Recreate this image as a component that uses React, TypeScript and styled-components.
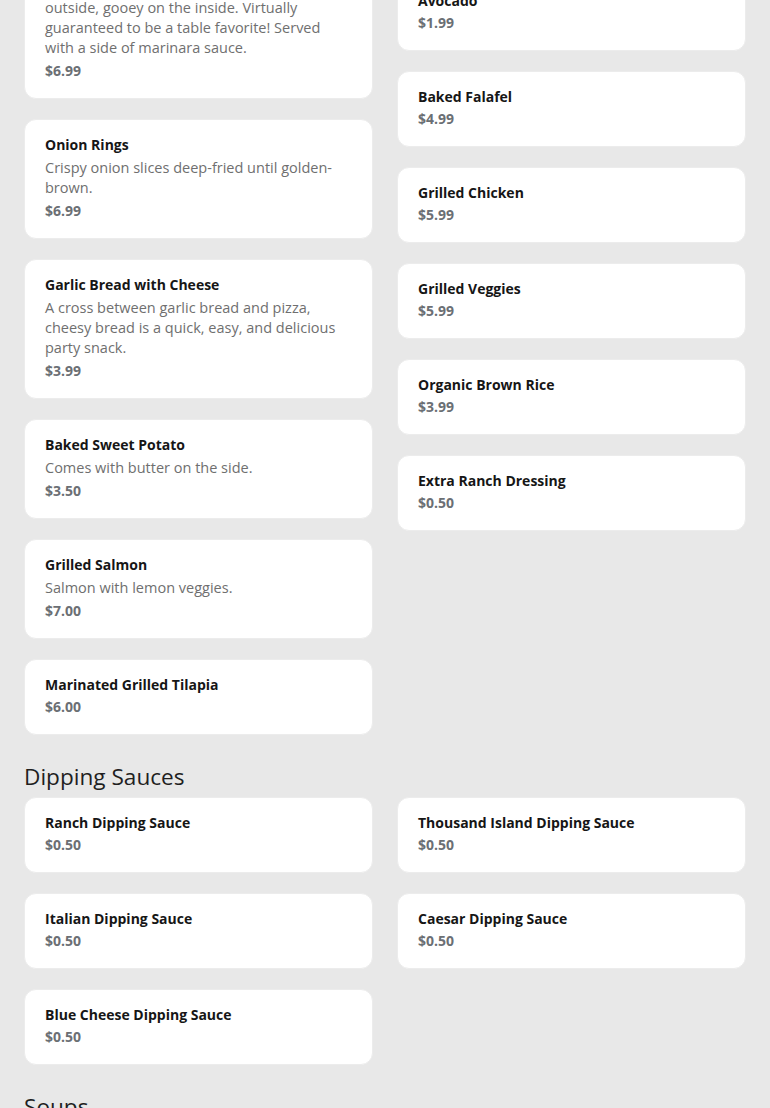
import styled, { createGlobalStyle } from "styled-components";

interface Item {
    name: string;
    description?: string;
    price: string;
}

interface Section {
    title: string;
    left: Item[];
    right: Item[];
}

const sections: Section[] = [
    {
        title: "Sides",
        left: [
            { name: "Loaded Potato Skins", description: "Crispy potato skins loaded with melted cheddar cheese, smoky bacon bits and green onions, then finished with a generous dollop of cool sour cream on top.", price: "$5.99" },
            { name: "Mozzarella Sticks", description: "Our classic mozzarella sticks, crispy on the outside, gooey on the inside. Virtually guaranteed to be a table favorite! Served with a side of marinara sauce.", price: "$6.99" },
            { name: "Onion Rings", description: "Crispy onion slices deep-fried until golden-brown.", price: "$6.99" },
            { name: "Garlic Bread with Cheese", description: "A cross between garlic bread and pizza, cheesy bread is a quick, easy, and delicious party snack.", price: "$3.99" },
            { name: "Baked Sweet Potato", description: "Comes with butter on the side.", price: "$3.50" },
            { name: "Grilled Salmon", description: "Salmon with lemon veggies.", price: "$7.00" },
            { name: "Marinated Grilled Tilapia", price: "$6.00" },
        ],
        right: [
            { name: "French Fries", price: "$2.99" },
            { name: "Side Salad", description: "Fresh greens with your choice of dressing.", price: "$3.99" },
            { name: "Avocado", price: "$1.99" },
            { name: "Baked Falafel", price: "$4.99" },
            { name: "Grilled Chicken", price: "$5.99" },
            { name: "Grilled Veggies", price: "$5.99" },
            { name: "Organic Brown Rice", price: "$3.99" },
            { name: "Extra Ranch Dressing", price: "$0.50" },
        ],
    },
    {
        title: "Dipping Sauces",
        left: [
            { name: "Ranch Dipping Sauce", price: "$0.50" },
            { name: "Italian Dipping Sauce", price: "$0.50" },
            { name: "Blue Cheese Dipping Sauce", price: "$0.50" },
        ],
        right: [
            { name: "Thousand Island Dipping Sauce", price: "$0.50" },
            { name: "Caesar Dipping Sauce", price: "$0.50" },
        ],
    },
    {
        title: "Soups",
        left: [
            { name: "Chicken Noodle Soup", description: "Homestyle broth with tender chicken and egg noodles.", price: "$4.99" },
        ],
        right: [
            { name: "Tomato Basil Soup", description: "Creamy tomato soup with fresh basil.", price: "$4.99" },
        ],
    },
];

const GlobalStyle = createGlobalStyle`
    html, body {
        margin: 0;
        padding: 0;
        background: #e8e8e8;
        font-family: "Open Sans", "Liberation Sans", sans-serif;
        overflow: hidden;
    }
`

const Page = styled.div`
    margin-top: -300px;
    padding: 24px 24px 40px;
    display: flex;
    flex-direction: column;
    gap: 27px;
`

const SectionBlock = styled.section`
    display: flex;
    flex-direction: column;
    gap: 6px;
`

const SectionTitle = styled.h2`
    margin: 0;
    font-size: 22.6px;
    line-height: 29px;
    font-weight: 400;
    color: #1f1f1f;
`

const Columns = styled.div`
    display: grid;
    grid-template-columns: 1fr 1fr;
    column-gap: 24px;
    align-items: start;
`

const Column = styled.div`
    display: flex;
    flex-direction: column;
    gap: 20px;
`

const Card = styled.div`
    background: #ffffff;
    border: 1px solid #ececec;
    border-radius: 12px;
    padding: 15px 24px 17px 20px;
    display: flex;
    flex-direction: column;
    gap: 2px;
`

const Name = styled.div`
    font-size: 14px;
    line-height: 20px;
    font-weight: 700;
    color: #161616;
`

const Description = styled.div`
    font-size: 14.5px;
    line-height: 20px;
    color: #6f6f6f;
    margin: 1px 0;
`

const Price = styled.div`
    font-size: 14px;
    line-height: 20px;
    font-weight: 700;
    color: #6b6f74;
`

function MenuCard({ item }: { item: Item }) {
    return (
        <Card>
            <Name>{item.name}</Name>
            {item.description && <Description>{item.description}</Description>}
            <Price>{item.price}</Price>
        </Card>
    )
}

export default function App() {
    return (
        <>
            <GlobalStyle />
            <Page>
                {sections.map(section => (
                    <SectionBlock key={section.title}>
                        <SectionTitle>{section.title}</SectionTitle>
                        <Columns>
                            <Column>
                                {section.left.map(item => <MenuCard key={item.name} item={item} />)}
                            </Column>
                            <Column>
                                {section.right.map(item => <MenuCard key={item.name} item={item} />)}
                            </Column>
                        </Columns>
                    </SectionBlock>
                ))}
            </Page>
        </>
    )
}
